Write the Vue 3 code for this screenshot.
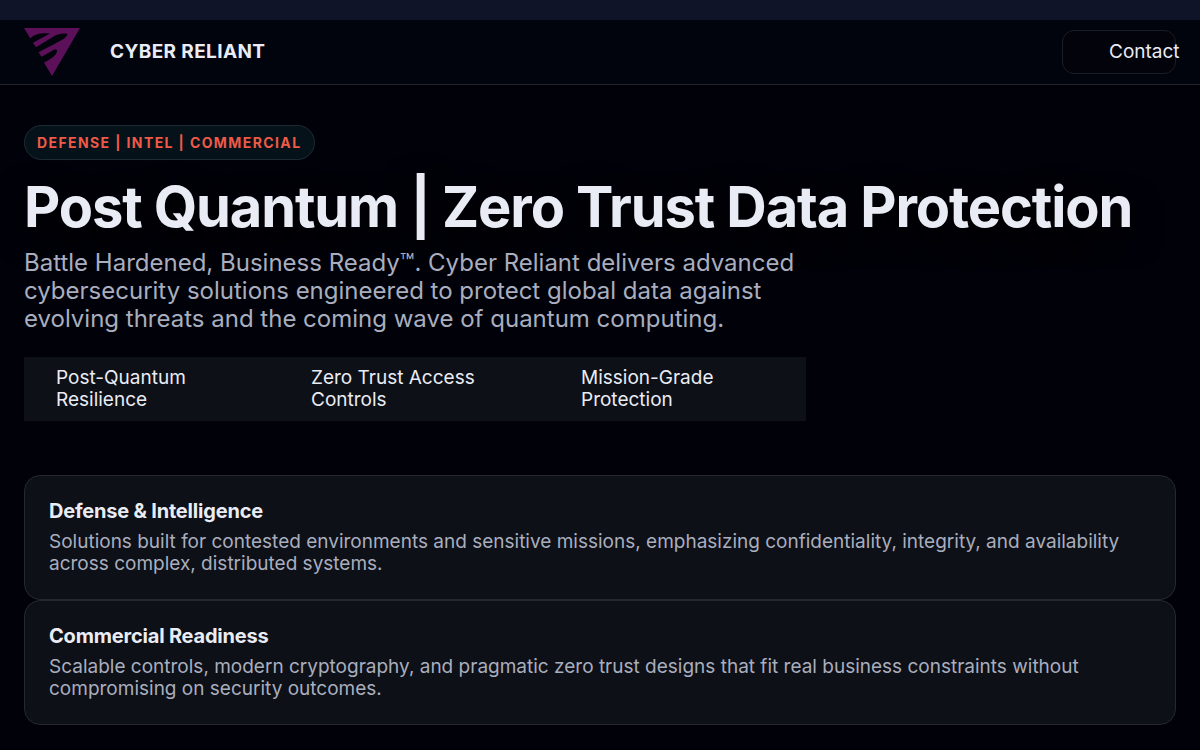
<script setup>
const features = [
  'Post-Quantum Resilience',
  'Zero Trust Access Controls',
  'Mission-Grade Protection',
]

const cards = [
  {
    title: 'Defense & Intelligence',
    text: 'Solutions built for contested environments and sensitive missions, emphasizing confidentiality, integrity, and availability across complex, distributed systems.',
  },
  {
    title: 'Commercial Readiness',
    text: 'Scalable controls, modern cryptography, and pragmatic zero trust designs that fit real business constraints without compromising on security outcomes.',
  },
]
</script>

<template>
  <div class="page">
    <header class="nav">
      <a class="brand" href="#">
        <svg class="logo" viewBox="0 0 56 48" aria-hidden="true">
          <path
            fill="#5c1059"
            d="M0 0H56L28 48L20 34.500C24 32.500 29 30 31.500 26.500C34 23 33.500 20.500 29.500 22L17.500 28.800L14.500 24.300L37 12.500C41 10 43.500 8 43.500 6C40 5 34 6 30 8.200L12 19.300L9 14.800L26 5.500C19 5 12 5 6.200 10.300Z"
          />
        </svg>
        <span class="name">CYBER RELIANT</span>
      </a>
      <button class="contact" type="button">Contact</button>
    </header>

    <main class="content">
      <section class="hero">
        <p class="badge">DEFENSE | INTEL | COMMERCIAL</p>
        <h1>Post Quantum | Zero Trust Data Protection</h1>
        <p class="lead">
          Battle Hardened, Business Ready™. Cyber Reliant delivers advanced cybersecurity solutions
          engineered to protect global data against evolving threats and the coming wave of quantum
          computing.
        </p>
        <ul class="features">
          <li v-for="feature in features" :key="feature">{{ feature }}</li>
        </ul>
      </section>

      <section class="cards">
        <article v-for="card in cards" :key="card.title" class="card">
          <h2>{{ card.title }}</h2>
          <p>{{ card.text }}</p>
        </article>
      </section>
    </main>
  </div>
</template>

<style>
body {
  margin: 0;
  background: #000109;
}
</style>

<style scoped>
.page {
  box-sizing: border-box;
  min-height: 100vh;
  border-top: 20px solid #0f1428;
  background: #000109;
  color: #eaecf5;
  font-family: Inter, "Liberation Sans", sans-serif;
  font-size: 19px;
  line-height: 22px;
}

.nav {
  display: flex;
  align-items: center;
  justify-content: space-between;
  box-sizing: border-box;
  min-height: 65px;
  padding: 0 24px;
  border-bottom: 1px solid #212329;
  background: #02040d;
}

.brand {
  display: flex;
  align-items: center;
  gap: 30px;
  color: inherit;
  text-decoration: none;
}

.logo {
  display: block;
  width: 56px;
  height: 48px;
}

.name {
  font-weight: 700;
  letter-spacing: 0.02em;
}

.contact {
  display: flex;
  align-items: center;
  box-sizing: border-box;
  width: 114px;
  height: 44px;
  padding: 0 0 0 46px;
  border: 1px solid #1b1d25;
  border-radius: 12px;
  background: #02030b;
  color: inherit;
  font: inherit;
  white-space: nowrap;
}

.content {
  padding: 40px 24px 25px;
}

.badge {
  box-sizing: border-box;
  width: fit-content;
  margin: 0;
  padding: 8px 12px;
  border: 1px solid #1d2c34;
  border-radius: 999px;
  background: #051219;
  color: #ef5a48;
  font-size: 14px;
  font-weight: 700;
  line-height: 17px;
  letter-spacing: 0.1em;
}

h1 {
  margin: 16px 0 11px;
  font-size: 56px;
  font-weight: 700;
  line-height: 62px;
  letter-spacing: -0.02em;
  text-shadow: 0 10px 30px #000;
}

.lead {
  max-width: 782px;
  margin: 0;
  color: #a9aebf;
  font-size: 24px;
  line-height: 28px;
}

.features {
  display: grid;
  grid-template-columns: 255fr 270fr 257fr;
  max-width: 782px;
  margin: 24px 0 54px;
  padding: 0;
  background: #0d1016;
  list-style: none;
}

.features li {
  padding: 10px 32px;
}

.card {
  padding: 24px;
  border: 1px solid #25282e;
  border-radius: 16px;
  background: #0d1016;
}

.card h2 {
  margin: 0 0 8px;
  font-size: 20px;
  font-weight: 700;
  line-height: 23px;
  letter-spacing: -0.01em;
}

.card p {
  margin: 0;
  color: #a9aebf;
}
</style>
